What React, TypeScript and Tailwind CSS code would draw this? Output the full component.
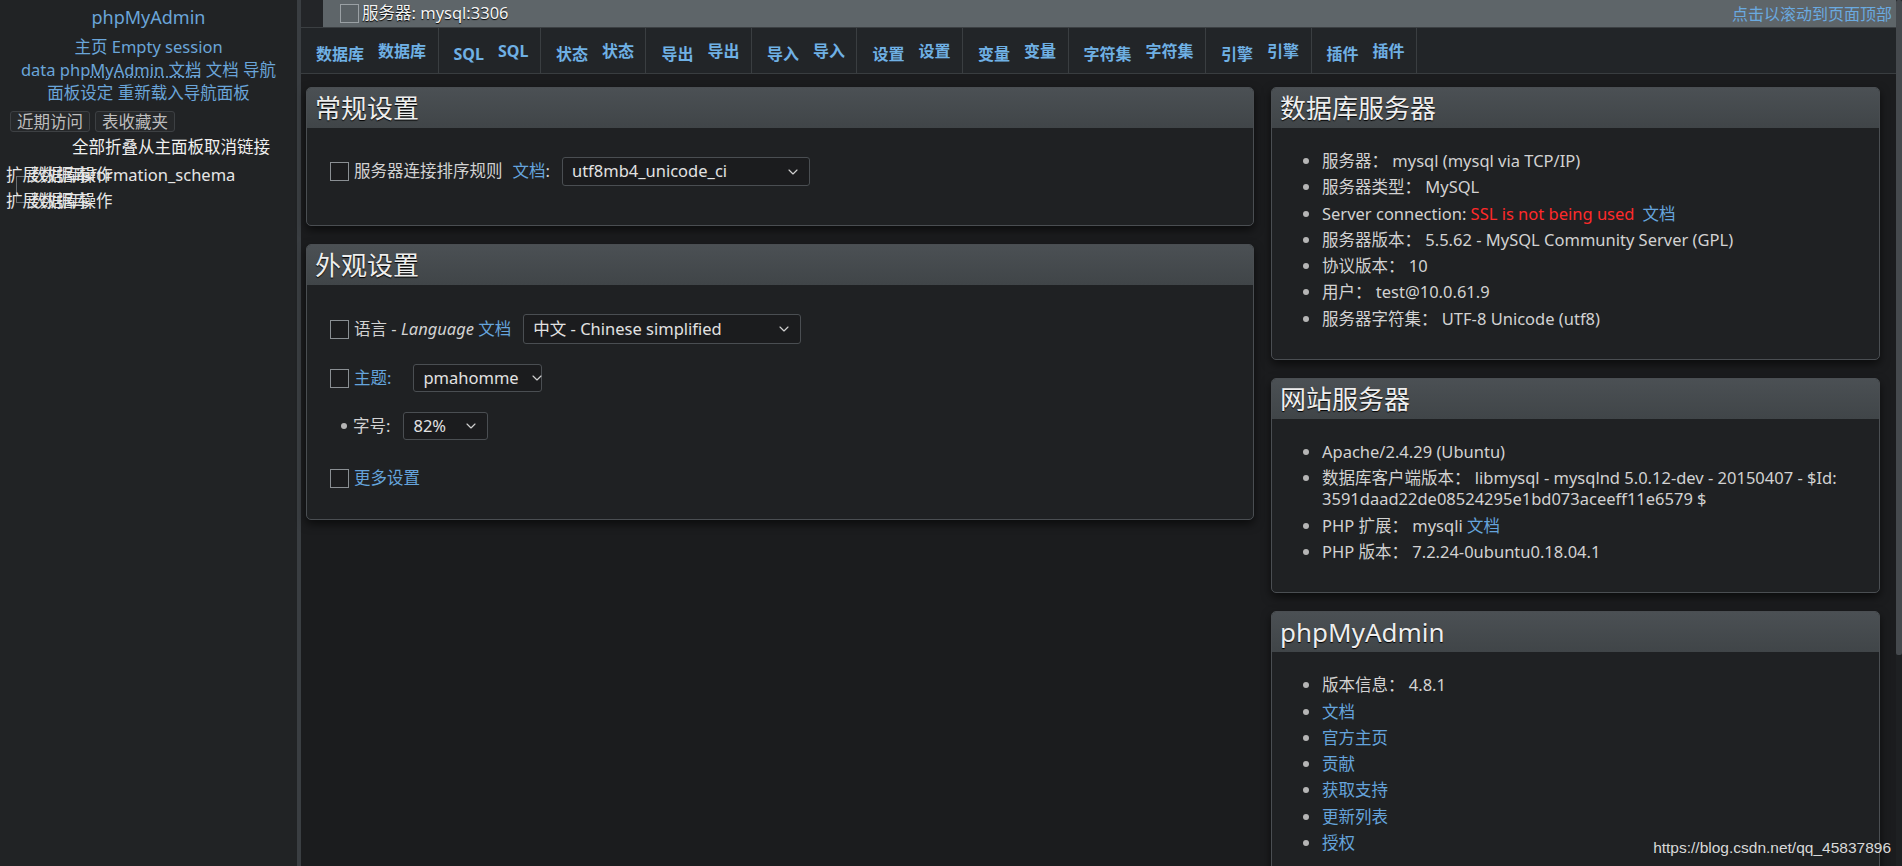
import React from "react";
import { ChevronDown } from "lucide-react";

const tabs = ["数据库", "SQL", "状态", "导出", "导入", "设置", "变量", "字符集", "引擎", "插件"];

const Checkbox = () => (
  <span className="inline-block h-[19px] w-[19px] shrink-0 border border-[#8a8f93] bg-[#1b1c1e]" />
);

const Select = ({ value, className }: { value: string; className: string }) => (
  <div
    className={`flex items-center justify-between gap-[10px] rounded-[3px] border border-[#4a4e52] bg-[#1b1c1e] pl-[9px] pr-[8px] text-[#e2e2e2] ${className}`}
  >
    <span>{value}</span>
    <ChevronDown size={16} strokeWidth={1.75} className="shrink-0 text-[#cfcfcf]" />
  </div>
);

const Panel = ({ title, children }: { title: string; children: React.ReactNode }) => (
  <div className="overflow-hidden rounded-[5px] border border-[#4a4e52] bg-[#1f2123] shadow-[0_4px_10px_rgba(0,0,0,0.6)]">
    <div className="h-[40px] bg-linear-to-b from-[#4b5054] to-[#404548] pl-[8px] text-[26px] leading-[40px] text-[#eeeeee] [text-shadow:0_1px_1px_#000]">
      {title}
    </div>
    {children}
  </div>
);

const Item = ({ children }: { children: React.ReactNode }) => (
  <li className="mb-[5.3px] leading-[21px] marker:text-[#b5b5b5]">{children}</li>
);

const Link = ({ children }: { children: React.ReactNode }) => (
  <span className="text-[#65a4dc]">{children}</span>
);

export default function App() {
  return (
    <div className="relative flex h-[866px] w-[1902px] overflow-hidden bg-[#1b1c1e] font-['Noto_Sans','Noto_Sans_CJK_SC',sans-serif] text-[16.5px] text-[#d2d2d2]">
      {/* navigation */}
      <aside className="w-[297px] shrink-0 bg-[#212325]">
        <div className="pt-[3px] text-center text-[18px] leading-[28px] text-[#6aa5d9]">phpMyAdmin</div>
        <div className="mt-[4px] text-center leading-[23px] text-[#6aa5d9]">
          <div>主页 Empty session</div>
          <div>
            data php<span className="underline decoration-dotted">MyAdmin 文档</span> 文档 导航
          </div>
          <div>面板设定 重新载入导航面板</div>
        </div>
        <div className="mt-[7px] flex gap-[5px] pl-[10px]">
          <span className="rounded-[3px] border border-[#3d4043] bg-[#26282a] px-[6px] leading-[19px] text-[#bdbdbd]">近期访问</span>
          <span className="rounded-[3px] border border-[#3d4043] bg-[#26282a] px-[6px] leading-[19px] text-[#bdbdbd]">表收藏夹</span>
        </div>
        <div className="mt-[3px] pl-[72px] leading-[23px] text-[#f0f0f0]">全部折叠从主面板取消链接</div>
        <div className="relative mt-[4px] h-[52px] text-[#e6e6e6]">
          <div className="absolute left-[16px] top-[14px] h-[27px] w-[10px] border-b border-l border-[#6b6f72]" />
          <div className="absolute left-[16px] top-[14px] w-[10px] border-t border-[#6b6f72]" />
          <span className="absolute left-[6px] top-0 leading-[26px]">扩展</span>
          <span className="absolute left-[76px] top-0 leading-[26px]">information_schema</span>
          <span className="absolute left-[40px] top-0 leading-[26px]">数据库</span>
          <span className="absolute left-[30px] top-0 leading-[26px]">数据库操作</span>
          <span className="absolute left-[6px] top-[26px] leading-[26px]">扩展</span>
          <span className="absolute left-[40px] top-[26px] leading-[26px]">数据库</span>
          <span className="absolute left-[30px] top-[26px] leading-[26px]">数据库操作</span>
        </div>
      </aside>
      <div className="w-[4px] shrink-0 bg-[#3a3e42]" />

      {/* main */}
      <main className="flex min-w-0 flex-1 flex-col">
        <div className="flex h-[28px] shrink-0 items-center border-b border-[#3b3f42] bg-[#5e6569]">
          <span className="h-full w-[22px] bg-[#232528]" />
          <span className="ml-[17px] inline-block h-[19px] w-[19px] border border-[#9aa0a4] bg-[#5a6165]" />
          <span className="ml-[3px] text-[#f4f4f4] [text-shadow:0_1px_1px_#000]">服务器: mysql:3306</span>
          <span className="ml-auto pr-[4px] text-[16px] text-[#6aaae0]">点击以滚动到页面顶部</span>
        </div>

        <div className="flex h-[46px] shrink-0 border-b border-[#393d40] bg-[#222528]">
          {tabs.map((t) => (
            <div key={t} className="flex h-full items-center border-r border-[#3a3e41] pl-[15px] pr-[11.5px] text-[16px] font-bold text-[#6fb0e4]">
              <span className="translate-y-[3px]">{t}</span>
              <span className="ml-[14px]">{t}</span>
            </div>
          ))}
        </div>

        <div className="flex gap-[17px] pl-[5px] pt-[13px]">
          <div className="flex w-[948px] flex-col gap-[18px]">
            <Panel title="常规设置">
              <div className="mb-[39px] mt-[29px] flex h-[29px] items-center pl-[23px]">
                <Checkbox />
                <span className="ml-[5px]">服务器连接排序规则</span>
                <span className="ml-[10px]"><Link>文档</Link>:</span>
                <Select value="utf8mb4_unicode_ci" className="ml-[12px] h-[29px] w-[248px]" />
              </div>
            </Panel>
            <Panel title="外观设置">
              <div className="pb-[26px] pl-[23px] pt-[29px]">
                <div className="flex h-[30px] items-center">
                  <Checkbox />
                  <span className="ml-[5px]">
                    语言 - <i>Language</i> <Link>文档</Link>
                  </span>
                  <Select value="中文 - Chinese simplified" className="ml-[12px] h-[30px] w-[278px]" />
                </div>
                <div className="mt-[19px] flex h-[30px] items-center">
                  <Checkbox />
                  <span className="ml-[5px]"><Link>主题:</Link></span>
                  <Select value="pmahomme" className="ml-[22px] h-[28px] w-[129px]" />
                </div>
                <div className="mt-[18px] flex h-[30px] items-center pl-[11px]">
                  <span className="h-[6px] w-[6px] rounded-full bg-[#b5b5b5]" />
                  <span className="ml-[6px]">字号:</span>
                  <Select value="82%" className="ml-[13px] h-[28px] w-[85px]" />
                </div>
                <div className="mt-[22px] flex h-[30px] items-center">
                  <Checkbox />
                  <span className="ml-[5px]"><Link>更多设置</Link></span>
                </div>
              </div>
            </Panel>
          </div>

          <div className="flex w-[609px] flex-col gap-[18px]">
            <Panel title="数据库服务器">
              <ul className="list-disc pb-[25px] pl-[50px] pt-[22px]">
                <Item>服务器： mysql (mysql via TCP/IP)</Item>
                <Item>服务器类型： MySQL</Item>
                <Item>
                  Server connection: <span className="text-[#ff2a2a]">SSL is not being used</span>
                  <span className="ml-[8px]"><Link>文档</Link></span>
                </Item>
                <Item>服务器版本： 5.5.62 - MySQL Community Server (GPL)</Item>
                <Item>协议版本： 10</Item>
                <Item>用户： test@10.0.61.9</Item>
                <Item>服务器字符集： UTF-8 Unicode (utf8)</Item>
              </ul>
            </Panel>
            <Panel title="网站服务器">
              <ul className="list-disc pb-[25px] pl-[50px] pt-[22px]">
                <Item>Apache/2.4.29 (Ubuntu)</Item>
                <Item>
                  数据库客户端版本： libmysql - mysqlnd 5.0.12-dev - 20150407 - $Id:
                  <br />
                  3591daad22de08524295e1bd073aceeff11e6579 $
                </Item>
                <Item>
                  PHP 扩展： mysqli <Link>文档</Link>
                </Item>
                <Item>PHP 版本： 7.2.24-0ubuntu0.18.04.1</Item>
              </ul>
            </Panel>
            <Panel title="phpMyAdmin">
              <ul className="list-disc pb-[25px] pl-[50px] pt-[22px]">
                <Item>版本信息： 4.8.1</Item>
                <Item><Link>文档</Link></Item>
                <Item><Link>官方主页</Link></Item>
                <Item><Link>贡献</Link></Item>
                <Item><Link>获取支持</Link></Item>
                <Item><Link>更新列表</Link></Item>
                <Item><Link>授权</Link></Item>
              </ul>
            </Panel>
          </div>
        </div>
      </main>

      {/* scrollbar */}
      <div className="w-[6px] shrink-0 bg-[#1e2022]">
        <div className="h-[655px] w-full rounded-[2px] bg-[#45494d]" />
      </div>

      <span className="absolute right-[11px] top-[836px] font-['Liberation_Sans',sans-serif] text-[15.5px] text-[#d9d9d9]">
        https://blog.csdn.net/qq_45837896
      </span>
    </div>
  );
}
